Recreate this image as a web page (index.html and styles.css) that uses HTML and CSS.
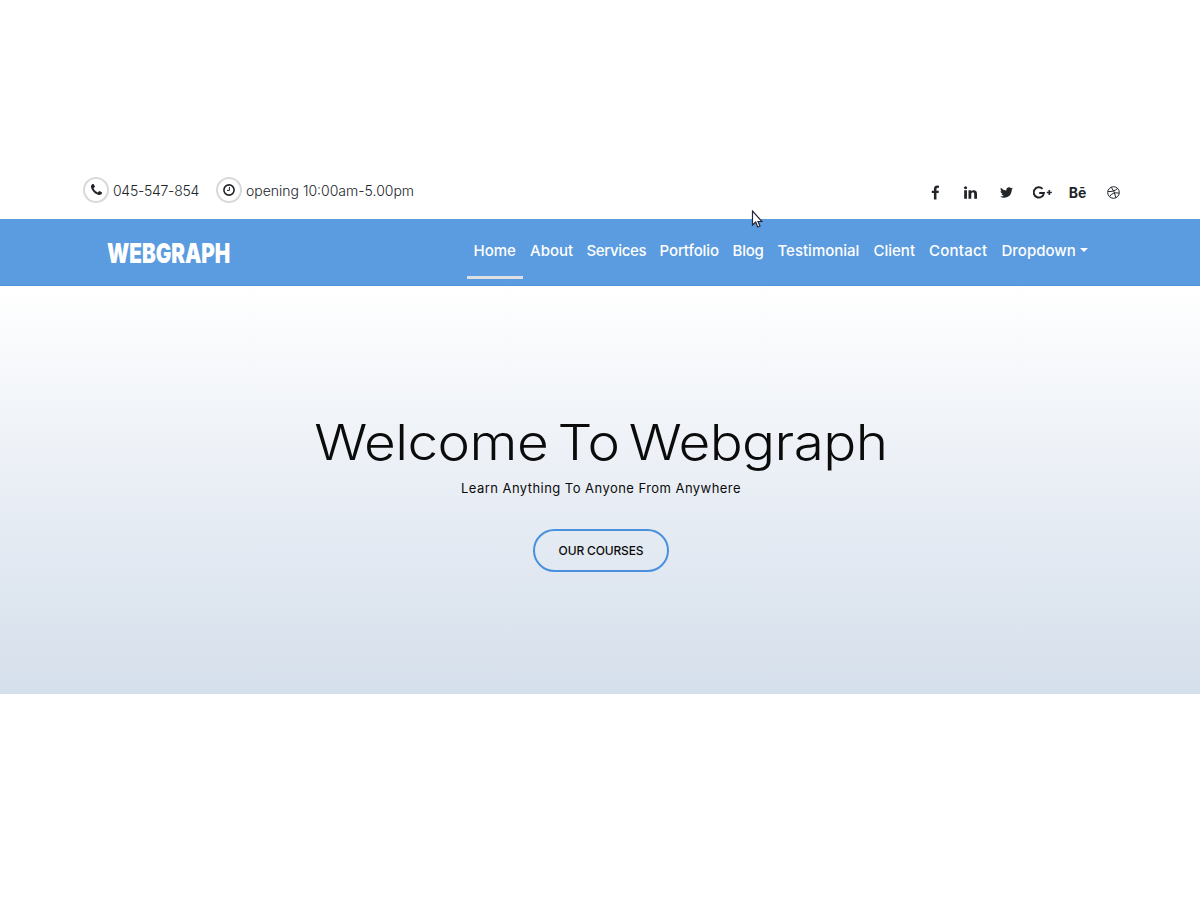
FILE: index.html
```html
<!DOCTYPE html>
<html lang="en">
<head>
<meta charset="utf-8">
<title>Webgraph</title>
<link rel="stylesheet" href="styles.css">
</head>
<body>
<div class="topbar">
  <div class="contact">
    <span class="ring"><svg width="11" height="14" viewBox="0 0 1408 1792"><path d="M1408 1240q0 27-10 70.5t-21 68.5q-21 50-122 106-94 51-186 51-27 0-53-3.5t-57.5-12.5-47-14.5-55.5-20.5-49-18q-98-35-175-83-127-79-264-216t-216-264q-48-77-83-175-3-9-18-49t-20.5-55.5-14.5-47-12.5-57.5-3.5-53q0-92 51-186 56-101 106-122 25-11 68.5-21t70.5-10q14 0 21 3 18 6 53 76 11 19 30 54t35 63.5 31 53.5q3 4 17.5 25t21.5 35.5 7 28.5q0 20-28.5 50t-62 55-62 53-28.5 46q0 9 5 22.5t8.5 20.5 14 24 11.5 19q76 137 174 235t235 174q2 1 19 11.5t24 14 20.5 8.5 22.5 5q18 0 46-28.5t53-62 55-62 50-28.5q14 0 28.5 7t35.5 21.5 25 17.5q25 15 53.5 31t63.5 35 54 30q70 35 76 53 3 7 3 21z"/></svg></span>
    <span class="phone">045-547-854</span>
    <span class="ring"><svg class="line" width="12" height="12" viewBox="0 0 12 12"><circle cx="6" cy="6" r="5.1" stroke-width="1.6"/><path d="M6.4 3v3.4H4"/></svg></span>
    <span class="hours">opening 10:00am-5.00pm</span>
  </div>
  <div class="social">
    <svg width="8" height="15" viewBox="0 0 959 1664"><path d="M959 12v264h-157q-86 0-116 36t-30 108v189h293l-39 296h-254v759h-306v-759h-255v-296h255v-218q0-186 104-288.5t277-102.5q147 0 228 12z"/></svg>
    <svg width="13" height="13" viewBox="0 130 1536 1500"><path d="M349 625v991h-330v-991h330zm21-306q1 73-50.500 122t-135.500 49h-2q-82 0-132-49t-50-122q0-74 51.500-122.500t134.500-48.500 133 48.500 51 122.500zm1166 729v568h-329v-530q0-105-40.500-164.500t-126.500-59.500q-63 0-105.500 34.500t-63.500 85.500q-11 30-11 81v553h-329q2-399 2-647t-1-296l-1-48h329v144h-2q20-32 41-56t56.500-52 87-43.500 114.500-15.500q171 0 275 113.500t104 332.500z"/></svg>
    <svg width="13" height="11" viewBox="40 256 1580 1280"><path d="M1620 408q-67 98-162 167 1 14 1 42 0 130-38 259.500t-115.500 248.500-184.500 210.500-258 146-323 54.500q-271 0-496-145 35 4 78 4 225 0 401-138-105-2-188-64.500t-114-159.500q33 5 61 5 43 0 85-11-112-23-185.500-111.500t-73.500-205.500v-4q68 38 146 41-66-44-105-115t-39-154q0-88 44-163 121 149 294.500 238.500t371.500 99.500q-8-38-8-74 0-134 94.500-228.500t228.500-94.500q140 0 236 102 109-21 205-78-37 115-142 178 93-10 186-50z"/></svg>
    <svg class="line" width="19" height="13" viewBox="0 0 19 13"><path stroke-width="2" d="M9.500 2.900A5.100 5.100 0 1 0 10.900 7H6.200"/><path stroke-width="1.600" d="M16.300 4v5M13.800 6.500h5"/></svg>
    <span class="behance">Bē</span>
    <svg class="line" width="13" height="13" viewBox="0 0 13 13"><circle cx="6.500" cy="6.500" r="5.800"/><path d="M4.200 1.200Q7.600 5.200 8.900 11.700M.8 5.600Q7.800 5.800 10.600 2.300M2.600 10.600Q5.400 5.800 12.200 7.100"/></svg>
  </div>
</div>
<nav class="navbar">
  <a class="brand">WEBGRAPH</a>
  <div class="menu">
    <a class="active">Home</a><a>About</a><a class="services">Services</a><a class="portfolio">Portfolio</a><a class="blog">Blog</a><a>Testimonial</a><a>Client</a><a class="contact-link">Contact</a><a class="dropdown">Dropdown<i class="caret"></i></a>
  </div>
</nav>
<main class="hero">
  <h1>Welcome To Webgraph</h1>
  <p>Learn Anything To Anyone From Anywhere</p>
  <a class="button">OUR COURSES</a>
</main>
<svg class="pointer" width="12" height="19" viewBox="0 0 12 19"><path d="M1.500 1v14l3.200-3 2 5 2.300-1-2-4.500H11z"/></svg>
</body>
</html>
```
FILE: styles.css
```css
* { box-sizing: border-box; }
body {
  margin: 0;
  padding-top: 162px;
  height: 900px;
  background: #fff;
  color: #212529;
  font-family: Inter, "Liberation Sans", sans-serif;
  overflow: hidden;
}
.topbar {
  display: flex;
  justify-content: space-between;
  height: 57px;
  padding: 0 80px 0 83px;
}
.contact { display: flex; align-items: center; font-size: 14px; font-weight: 350; white-space: nowrap; }
.ring {
  display: grid;
  place-items: center;
  width: 26px;
  height: 26px;
  margin: 0 4px 1px 0;
  border: 2px solid #d9d9d9;
  border-radius: 50%;
}
svg { fill: #212529; }
.line { fill: none; stroke: #212529; stroke-width: 1; }
.phone { width: 103px; letter-spacing: -.28px; }
.hours { letter-spacing: 0; }
.social {
  display: grid;
  grid-template-columns: repeat(6, 35.6px);
  place-items: center;
  margin-right: -11px;
  padding-top: 4px;
}
.behance { font-size: 14px; line-height: 20px; font-weight: 700; }
.navbar {
  display: flex;
  height: 67px;
  padding-left: 107px;
  background: #5b9bdf;
  border-bottom: 1px solid #4f91da;
  color: #fff;
}
.brand {
  width: 359.5px;
  padding-top: 20px;
  font-size: 27px;
  line-height: 30px;
  font-weight: 900;
  white-space: nowrap;
  transform: scaleX(.763);
  transform-origin: left;
}
.menu {
  display: grid;
  grid-template-columns: 56.5px 56.5px 73px 73px 45px 96px 55.5px 72.5px 100px;
  height: 60px;
  font-size: 15px;
  font-weight: 450;
  line-height: 51px;
  white-space: nowrap;
}
.menu a { height: 60px; padding: 6px 0 0 7px; }
.menu .active { border-bottom: 3px solid #dedfe3; }
.services { letter-spacing: -.35px; }
.portfolio { letter-spacing: -.1px; }
.blog { letter-spacing: -.2px; }
.contact-link { letter-spacing: .25px; }
.dropdown { display: flex; }
.caret { height: 4px; margin: 23px 0 0 4px; border: 4px solid transparent; border-top-color: #fff; border-bottom: 0; }
.hero {
  display: flex;
  flex-direction: column;
  align-items: center;
  height: 407.5px;
  padding-top: 121px;
  background: linear-gradient(#fff, #e9eef5 50%, #d5dfeb);
  color: #0b0b0b;
  white-space: nowrap;
}
h1 {
  margin: 0 0 0 2px;
  font-size: 49px;
  line-height: 71px;
  font-weight: 290;
  letter-spacing: -.5px;
  word-spacing: -5px;
  transform: scaleX(1.12);
}
p { margin: -2px 0 0 2px; font-size: 13px; line-height: 24px; font-weight: 400; letter-spacing: .45px; }
.button {
  display: grid;
  place-items: center;
  width: 136px;
  height: 43px;
  margin: 29px 0 0 2px;
  border: 2px solid #4a90dc;
  border-radius: 22px;
  font-size: 12px;
  font-weight: 500;
  letter-spacing: -.15px;
}
.pointer { position: absolute; left: 751px; top: 210px; fill: #fff; stroke: #26283a; stroke-width: 1.2; }
```
